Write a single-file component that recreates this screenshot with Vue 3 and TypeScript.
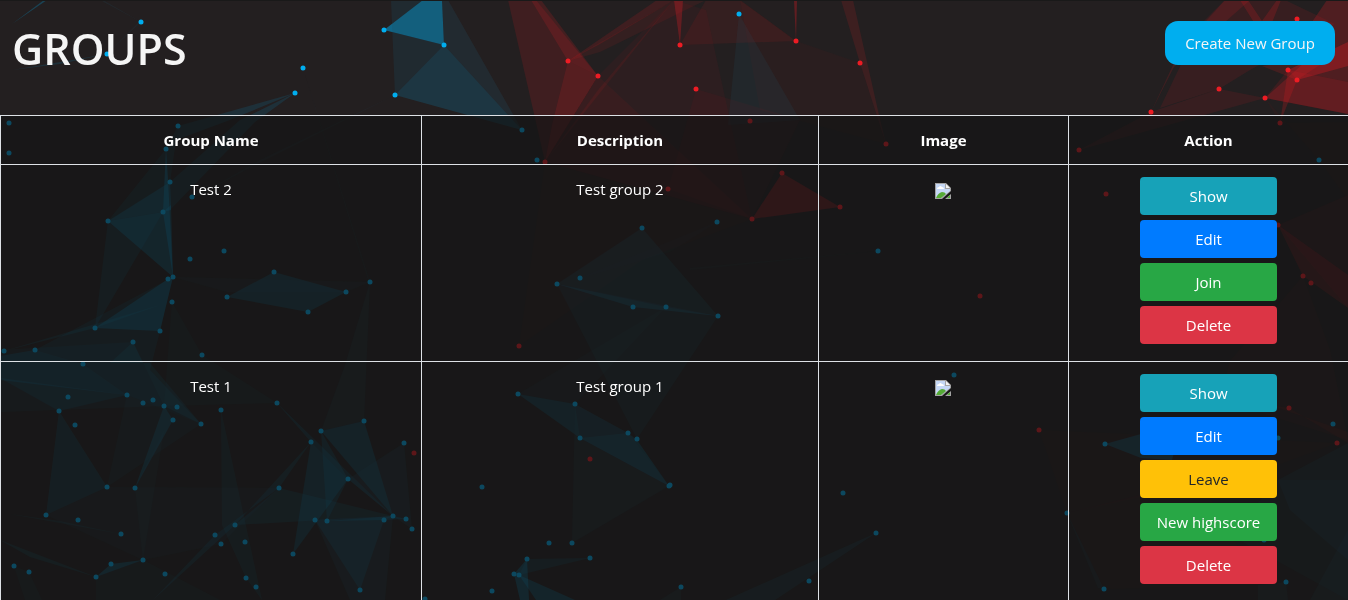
<script setup lang="ts">
type Tone = 'blue' | 'red' | 'slate'

interface Facet {
  tone: Tone
  alpha: number
  points: string
}

interface Action {
  label: string
  kind: 'info' | 'primary' | 'success' | 'warning' | 'danger'
}

interface Group {
  name: string
  description: string
  actions: Action[]
}

const show: Action = { label: 'Show', kind: 'info' }
const edit: Action = { label: 'Edit', kind: 'primary' }
const join: Action = { label: 'Join', kind: 'success' }
const leave: Action = { label: 'Leave', kind: 'warning' }
const highscore: Action = { label: 'New highscore', kind: 'success' }
const remove: Action = { label: 'Delete', kind: 'danger' }

const groups: Group[] = [
  { name: 'Test 2', description: 'Test group 2', actions: [show, edit, join, remove] },
  { name: 'Test 1', description: 'Test group 1', actions: [show, edit, leave, highscore, remove] },
]

const facets: Facet[] = [
  // upper left
  { tone: 'blue', alpha: 0.25, points: '12,24 44,0 47,0' },
  { tone: 'blue', alpha: 0.12, points: '12,70 60,62 107,54 60,64' },
  { tone: 'slate', alpha: 0.12, points: '100,0 141,22 103,0' },
  { tone: 'slate', alpha: 0.1, points: '141,22 107,54 139,22' },
  { tone: 'blue', alpha: 0.12, points: '295,93 178,126 176,140 230,120' },
  { tone: 'blue', alpha: 0.12, points: '295,93 255,122 170,210 170,182 240,120' },
  { tone: 'blue', alpha: 0.1, points: '178,126 170,182 108,221 166,149' },
  { tone: 'blue', alpha: 0.32, points: '166,149 168,180 173,277 163,212' },
  { tone: 'blue', alpha: 0.3, points: '108,221 170,182 171,210 163,212' },
  { tone: 'blue', alpha: 0.28, points: '108,221 163,212 171,205 173,277' },
  { tone: 'blue', alpha: 0.12, points: '163,212 95,328 108,221' },
  { tone: 'slate', alpha: 0.1, points: '303,68 370,282 368,280' },
  { tone: 'slate', alpha: 0.1, points: '395,95 255,165 190,200 260,160' },
  // header centre
  { tone: 'blue', alpha: 0.45, points: '384,30 423,0 442,0 444,45' },
  { tone: 'blue', alpha: 0.08, points: '391,0 423,0 384,30 444,45 395,95' },
  { tone: 'blue', alpha: 0.17, points: '444,45 395,95 522,130' },
  { tone: 'slate', alpha: 0.18, points: '442,0 448,0 522,130 444,45' },
  { tone: 'red', alpha: 0.14, points: '508,0 536,0 598,76 545,162' },
  { tone: 'red', alpha: 0.16, points: '531,0 541,0 598,76 568,61' },
  { tone: 'red', alpha: 0.14, points: '568,61 598,76 545,162 552,125' },
  { tone: 'red', alpha: 0.14, points: '568,61 657,0 674,0 600,44' },
  { tone: 'red', alpha: 0.09, points: '568,61 674,0 706,0 600,52' },
  { tone: 'red', alpha: 0.09, points: '674,0 545,162 598,90' },
  { tone: 'red', alpha: 0.28, points: '674,0 683,0 680,45' },
  { tone: 'red', alpha: 0.09, points: '680,45 706,0 740,0 796,41' },
  { tone: 'red', alpha: 0.05, points: '598,76 674,0 706,10 730,120 752,219 545,162' },
  { tone: 'red', alpha: 0.06, points: '598,76 545,162 752,219' },
  { tone: 'red', alpha: 0.05, points: '696,89 800,120 752,219 668,189' },
  { tone: 'red', alpha: 0.3, points: '794,0 797,0 796,41' },
  { tone: 'red', alpha: 0.04, points: '740,0 796,41 860,63 886,144 760,110' },
  { tone: 'red', alpha: 0.13, points: '841,0 853,0 879,115 886,144 860,63' },
  { tone: 'slate', alpha: 0.12, points: '739,14 728,125 800,120' },
  // upper right
  { tone: 'red', alpha: 0.13, points: '1151,112 1180,50 1225,0 1250,0 1174,67' },
  { tone: 'red', alpha: 0.1, points: '1200,25 1225,0 1285,0 1335,24 1250,70 1219,89 1160,108' },
  { tone: 'red', alpha: 0.18, points: '1240,0 1248,0 1262,21 1277,0 1281,0 1265,40' },
  { tone: 'red', alpha: 0.22, points: '1348,0 1327,0 1310,25 1335,35 1265,98 1348,114' },
  { tone: 'red', alpha: 0.3, points: '1348,42 1288,70 1297,80 1348,66' },
  { tone: 'red', alpha: 0.16, points: '1262,66 1335,55 1297,80' },
  { tone: 'red', alpha: 0.2, points: '1288,70 1297,80 1280,123' },
  { tone: 'red', alpha: 0.12, points: '1265,98 1288,70 1348,82 1348,114' },
  { tone: 'red', alpha: 0.1, points: '1151,112 1219,89 1265,98 1079,150' },
  { tone: 'red', alpha: 0.04, points: '1265,98 1280,123 1348,122 1348,200 1319,160' },
  // table, centre
  { tone: 'red', alpha: 0.32, points: '782,173 840,207 752,219' },
  { tone: 'red', alpha: 0.04, points: '545,162 519,346 642,260 752,219' },
  { tone: 'slate', alpha: 0.26, points: '642,228 557,284 633,307 718,316' },
  { tone: 'slate', alpha: 0.18, points: '557,284 718,316 637,439' },
  { tone: 'blue', alpha: 0.1, points: '557,284 666,307 718,316 633,307' },
  { tone: 'slate', alpha: 0.06, points: '717,222 580,278 670,252' },
  { tone: 'slate', alpha: 0.08, points: '690,268 878,251 690,270' },
  { tone: 'slate', alpha: 0.1, points: '666,307 518,394 575,404' },
  { tone: 'blue', alpha: 0.2, points: '518,394 575,404 580,438' },
  { tone: 'blue', alpha: 0.12, points: '575,404 628,433 580,438' },
  { tone: 'blue', alpha: 0.24, points: '580,438 628,433 637,440 669,486' },
  { tone: 'slate', alpha: 0.16, points: '575,404 628,433 669,486 572,543' },
  { tone: 'blue', alpha: 0.12, points: '527,559 590,558 519,575' },
  { tone: 'blue', alpha: 0.3, points: '527,559 529,600 520,600 514,574' },
  { tone: 'blue', alpha: 0.26, points: '519,575 575,600 536,600' },
  { tone: 'slate', alpha: 0.24, points: '876,533 726,600 775,600' },
  { tone: 'slate', alpha: 0.16, points: '681,587 660,600 681,600' },
  // left, middle
  { tone: 'blue', alpha: 0.2, points: '274,272 346,292 308,312 227,297' },
  { tone: 'slate', alpha: 0.1, points: '173,277 370,282 346,292 227,292' },
  { tone: 'blue', alpha: 0.28, points: '168,279 173,277 160,331 95,328' },
  { tone: 'blue', alpha: 0.11, points: '173,277 35,350 83,364 127,395 201,424 150,370 160,331' },
  { tone: 'blue', alpha: 0.14, points: '4,351 160,305 95,328' },
  { tone: 'blue', alpha: 0.18, points: '0,356 35,350 83,364 127,395 0,380' },
  { tone: 'blue', alpha: 0.12, points: '0,378 127,395 59,411' },
  { tone: 'blue', alpha: 0.07, points: '0,350 133,342 164,406 0,412' },
  { tone: 'blue', alpha: 0.13, points: '133,342 110,363 150,363 201,424 164,406' },
  { tone: 'slate', alpha: 0.12, points: '172,302 202,355 277,403 164,406' },
  { tone: 'slate', alpha: 0.16, points: '370,282 345,365 321,431 364,421' },
  // left, lower
  { tone: 'blue', alpha: 0.15, points: '59,411 107,487 46,515' },
  { tone: 'blue', alpha: 0.24, points: '164,406 173,420 135,488' },
  { tone: 'slate', alpha: 0.15, points: '127,395 201,424 107,487' },
  { tone: 'slate', alpha: 0.13, points: '164,430 135,488 143,560' },
  { tone: 'blue', alpha: 0.1, points: '221,410 262,600 246,578 222,525' },
  { tone: 'blue', alpha: 0.15, points: '277,403 311,442 348,479 393,516 315,440' },
  { tone: 'blue', alpha: 0.22, points: '321,431 364,421 393,516' },
  { tone: 'blue', alpha: 0.2, points: '311,442 348,479 293,554' },
  { tone: 'blue', alpha: 0.16, points: '321,431 348,479 327,521' },
  { tone: 'slate', alpha: 0.2, points: '404,443 348,479 393,516 412,529' },
  { tone: 'blue', alpha: 0.13, points: '279,488 235,525 393,516' },
  { tone: 'blue', alpha: 0.14, points: '311,442 279,488 215,535 153,600 235,525' },
  { tone: 'blue', alpha: 0.18, points: '315,520 393,516 384,520 360,590' },
  { tone: 'slate', alpha: 0.2, points: '315,520 393,516 385,600 350,600' },
  { tone: 'blue', alpha: 0.2, points: '327,521 393,516 406,519 384,520' },
  { tone: 'blue', alpha: 0.28, points: '96,577 111,564 143,560' },
  { tone: 'blue', alpha: 0.13, points: '0,540 96,577 30,557' },
  { tone: 'blue', alpha: 0.1, points: '10,514 121,534 60,521' },
  { tone: 'slate', alpha: 0.1, points: '107,487 279,488 221,544 143,560 46,515' },
  { tone: 'slate', alpha: 0.12, points: '96,577 143,560 220,600 96,600' },
  { tone: 'slate', alpha: 0.12, points: '14,566 29,572 42,600 25,600' },
  // right, lower
  { tone: 'red', alpha: 0.2, points: '1278,225 1348,275 1348,308 1303,276' },
  { tone: 'red', alpha: 0.08, points: '1278,225 1348,195 1348,308' },
  { tone: 'red', alpha: 0.06, points: '1303,276 1230,361 1220,400 1348,440 1330,350' },
  { tone: 'red', alpha: 0.09, points: '1289,408 1270,405 1348,432 1348,443' },
  { tone: 'red', alpha: 0.04, points: '1039,430 1337,443 1264,470 1067,513' },
  { tone: 'blue', alpha: 0.26, points: '1105,444 1141,434 1180,430 1172,460 1141,458' },
  { tone: 'slate', alpha: 0.18, points: '1348,443 1278,480 1290,510 1348,560' },
  { tone: 'slate', alpha: 0.12, points: '1278,480 1230,535 1348,600 1348,480' },
  { tone: 'slate', alpha: 0.14, points: '1067,513 1104,589 1098,588' },
  { tone: 'slate', alpha: 0.16, points: '1286,582 1258,585 1258,600 1288,600' },
  { tone: 'slate', alpha: 0.16, points: '1348,530 1310,600 1348,600' },
  { tone: 'red', alpha: 0.04, points: '1067,513 1200,480 1260,585 1104,589' },
]

const blueDots: number[][] = [
  [141, 22], [107, 54], [303, 68], [295, 93], [384, 30], [444, 45], [395, 95], [522, 130], [537, 160],
  [739, 14], [9, 123], [9, 153], [178, 126], [166, 149], [170, 182], [192, 197], [163, 212], [108, 221],
  [190, 259], [224, 251], [168, 279], [173, 277], [274, 272], [227, 297], [346, 292], [370, 282],
  [308, 312], [172, 302], [95, 328], [160, 331], [133, 342], [202, 355], [4, 351], [35, 350], [83, 364],
  [642, 228], [717, 222], [878, 251], [580, 278], [557, 284], [633, 307], [666, 307], [718, 316],
  [68, 397], [59, 411], [75, 425], [127, 395], [143, 403], [153, 400], [164, 406], [177, 407], [173, 420],
  [201, 424], [221, 410], [277, 403], [107, 487], [135, 488], [46, 515], [78, 520], [121, 534], [14, 566],
  [29, 572], [111, 564], [96, 577], [143, 560], [165, 574], [215, 535], [221, 544], [235, 525], [245, 542],
  [246, 578], [256, 587], [279, 488], [311, 442], [321, 431], [364, 421], [404, 443], [348, 479],
  [315, 520], [327, 521], [293, 554], [384, 520], [393, 516], [406, 519], [412, 529], [360, 590],
  [425, 599], [518, 394], [575, 404], [580, 438], [628, 433], [637, 439], [669, 486], [670, 485],
  [482, 487], [549, 543], [572, 543], [527, 559], [590, 558], [514, 574], [519, 575], [492, 591],
  [681, 587], [809, 581], [843, 493], [876, 533], [954, 375], [1105, 444], [1067, 513], [1104, 589],
  [1333, 424], [1278, 438], [1264, 540], [1286, 582], [1319, 160],
]

const redDots: number[][] = [
  [568, 61], [598, 76], [680, 45], [696, 89], [796, 41], [860, 63], [545, 162], [750, 121], [886, 144],
  [668, 189], [782, 173], [752, 219], [840, 207], [519, 346], [1297, 19], [1288, 70], [1297, 80],
  [1265, 98], [1219, 89], [1151, 112], [1280, 123], [1079, 150], [1106, 194], [980, 296], [1278, 225],
  [1303, 276], [1311, 283], [414, 453], [590, 459], [1039, 430], [1289, 408], [1337, 443],
]
</script>

<template>
  <div class="page">
    <svg class="backdrop" viewBox="0 0 1348 600" preserveAspectRatio="xMidYMin slice" aria-hidden="true">
      <polygon
        v-for="(facet, i) in facets"
        :key="'f' + i"
        :class="facet.tone"
        :points="facet.points"
        :fill-opacity="facet.alpha"
      />
      <circle v-for="(dot, i) in blueDots" :key="'b' + i" class="blue" :cx="dot[0]" :cy="dot[1]" r="2.5" />
      <circle v-for="(dot, i) in redDots" :key="'r' + i" class="red" :cx="dot[0]" :cy="dot[1]" r="2.5" />
    </svg>

    <header class="top">
      <h1>GROUPS</h1>
      <a class="create" href="#create">Create New Group</a>
    </header>

    <table>
      <colgroup>
        <col class="col-name" />
        <col class="col-description" />
        <col class="col-image" />
        <col class="col-action" />
      </colgroup>
      <thead>
        <tr>
          <th scope="col">Group Name</th>
          <th scope="col">Description</th>
          <th scope="col">Image</th>
          <th scope="col">Action</th>
        </tr>
      </thead>
      <tbody>
        <tr v-for="group in groups" :key="group.name">
          <td>{{ group.name }}</td>
          <td>{{ group.description }}</td>
          <td>
            <svg class="missing" viewBox="0 0 16 16" role="img" aria-label="Group image">
              <path d="M0 0H11L16 5V8L7 16H0Z" fill="#a3a3a3" />
              <path d="M1 1H10V6H15V8L6 15H1Z" fill="#c5d7f5" />
              <path d="M11 1L15 5H11Z" fill="#f3f3f3" />
              <path d="M2 6Q2 4 4 4Q5 2 7 4Q9 4 9 6Z" fill="#fff" />
              <path d="M1 15Q3 10 7 9Q10 9 11 11L6 15Z" fill="#55aa35" />
              <path d="M16 11V16H10Z" fill="#a3a3a3" />
              <path d="M15 12V15H12Z" fill="#55aa35" />
            </svg>
          </td>
          <td>
            <div class="actions">
              <button v-for="action in group.actions" :key="action.label" type="button" :class="action.kind">
                {{ action.label }}
              </button>
            </div>
          </td>
        </tr>
      </tbody>
    </table>
  </div>
</template>

<style>
html {
  scrollbar-width: none;
  background: #231f20;
}

body {
  margin: 0;
}
</style>

<style scoped>
.page {
  position: relative;
  min-height: 100vh;
  box-sizing: border-box;
  border-top: 1px solid #191919;
  color: #fff;
  font-family: "Open Sans", "Noto Sans", sans-serif;
  font-size: 15px;
  line-height: 24px;
}

.backdrop {
  position: fixed;
  inset: 0;
  z-index: -1;
  width: 100%;
  height: 100%;
}

.blue {
  fill: #00aeef;
}

.red {
  fill: #ed1c24;
}

.slate {
  fill: #23607c;
}

.top {
  display: flex;
  justify-content: space-between;
  align-items: flex-start;
  height: 114px;
  padding: 20px 13px 0 12px;
  box-sizing: border-box;
}

h1 {
  margin: 0;
  color: #f5f5f5;
  font-size: 43px;
  font-weight: 600;
  line-height: 56px;
}

.create {
  box-sizing: border-box;
  width: 170px;
  padding: 10px 0;
  border-radius: 13px;
  background: #00aeef;
  color: #f5f5f5;
  text-align: center;
  text-decoration: none;
}

table {
  width: 100%;
  table-layout: fixed;
  border-spacing: 0;
  border-bottom: 1px solid #dee2e6;
  background: rgba(18, 20, 20, 0.66);
}

.col-name {
  width: 31.23%;
}

.col-description {
  width: 29.45%;
}

.col-image {
  width: 18.55%;
}

th,
td {
  padding: 12px;
  border-top: 1px solid #dee2e6;
  border-left: 1px solid #dee2e6;
  text-align: center;
  vertical-align: top;
}

th {
  font-weight: 700;
}

.missing {
  width: 16px;
  height: 16px;
  vertical-align: middle;
}

.actions {
  display: flex;
  flex-direction: column;
  align-items: center;
  gap: 5px;
  padding-bottom: 5px;
}

button {
  width: 137px;
  height: 38px;
  padding: 0;
  border: 0;
  border-radius: 4px;
  color: #fff;
  font: inherit;
  cursor: pointer;
}

.info {
  background: #17a2b8;
}

.primary {
  background: #007bff;
}

.success {
  background: #28a745;
}

.warning {
  background: #ffc107;
  color: #212529;
}

.danger {
  background: #dc3545;
}
</style>
